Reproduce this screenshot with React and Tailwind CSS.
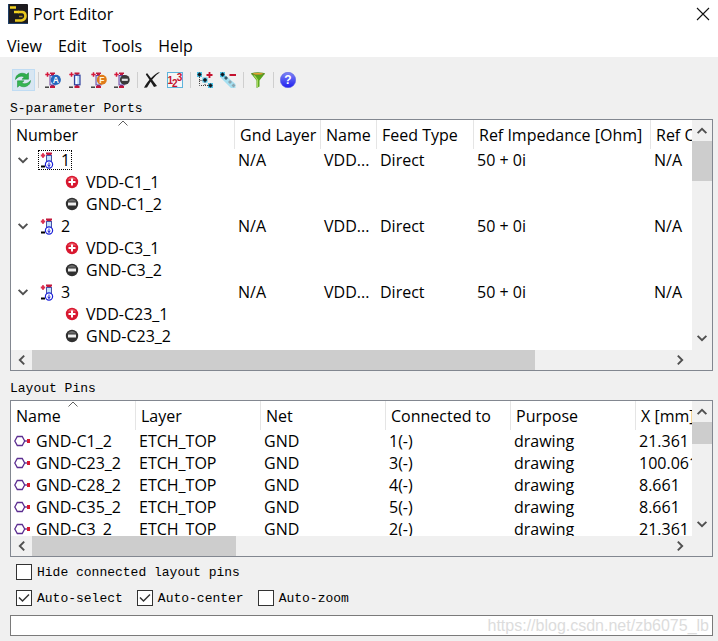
import { useState } from 'react';
import clsx from 'clsx';

const ports = [
  { id: 1, plus: "VDD-C1_1", minus: "GND-C1_2" },
  { id: 2, plus: "VDD-C3_1", minus: "GND-C3_2" },
  { id: 3, plus: "VDD-C23_1", minus: "GND-C23_2" },
];

const pins = [
  { name: "GND-C1_2", connected: "1(-)", x: "21.361" },
  { name: "GND-C23_2", connected: "3(-)", x: "100.061" },
  { name: "GND-C28_2", connected: "4(-)", x: "8.661" },
  { name: "GND-C35_2", connected: "5(-)", x: "8.661" },
  { name: "GND-C3_2", connected: "2(-)", x: "21.361" },
];

const Icon = ({ children, className = "size-4" }) => (
  <svg viewBox="0 0 16 16" className={clsx("block shrink-0", className)} aria-hidden="true">
    {children}
  </svg>
);

const LogoIcon = () => (
  <svg viewBox="0 0 20 20" className="block size-5 shrink-0" aria-hidden="true">
    <rect width="20" height="20" rx="1" fill="#1d1b1e" />
    <path d="M0.5 0V20M0 19.5H20" stroke="#1f4068" />
    <path d="M2 3.5H8M6 8H11" stroke="#f3d321" strokeWidth="2.6" />
    <path d="M10 8H14.5Q17.5 8.5 17.5 12T13.5 16.5H7" fill="none" stroke="#e9c81d" strokeWidth="2.6" />
    <path d="M11 12.5H14.5" stroke="#a58b17" strokeWidth="1.5" />
  </svg>
);

const RefreshIcon = () => (
  <Icon>
    <path d="M0.5 7.5C0.5 2 7 -0.5 11.5 2.5L13.5 0.8V7.2H7L9.2 5C6.5 3.3 3.2 4.3 0.5 7.5Z" fill="#2fae4b" stroke="#168a35" strokeWidth="0.5" />
    <path d="M15.5 8.5C15.5 14 9 16.5 4.5 13.5L2.5 15.2V8.8H9L6.8 11C9.5 12.7 12.8 11.7 15.5 8.5Z" fill="#36b653" stroke="#168a35" strokeWidth="0.5" />
  </Icon>
);

// Plus/minus marks and the tube that all port icons share
const PortBase = () => (
  <>
    <path d="M0.3 2.5H4.7M2.5 0.3V4.7" stroke="#d5163a" strokeWidth="1.5" />
    <path d="M0 15.2H4" stroke="#333333" strokeWidth="1.4" />
    <path d="M5 0.5H10V2H9V4H6V2H5ZM6 12.5H9V14H10V16H5V14H6Z" fill="#c2183c" />
    <rect x="5" y="3.5" width="5" height="9.5" fill="#c9e3ff" stroke="#6b3f9c" />
  </>
);

const PortAutoIcon = () => (
  <Icon>
    <PortBase />
    <circle cx="10.8" cy="7.8" r="5.1" fill="#2468bd" />
    <text x="10.8" y="10.8" textAnchor="middle" fontSize="8.5" fontWeight="700" fontFamily="Liberation Sans, sans-serif" fill="#ffffff">A</text>
  </Icon>
);

const PortTubeIcon = () => (
  <Icon>
    <path d="M1.3 2.5H5.7M3.5 0.3V4.7" stroke="#d5163a" strokeWidth="1.5" />
    <path d="M1 15.2H5" stroke="#333333" strokeWidth="1.4" />
    <path d="M6.5 0.5H11.5V2H10.5V3.5H7.5V2H6.5ZM7.5 12.5H10.5V14H11.5V16H6.5V14H7.5Z" fill="#c2183c" />
    <rect x="6.5" y="3.2" width="5.5" height="9.6" fill="#bfe0fb" stroke="#31409f" strokeWidth="1.2" />
    <path d="M8.5 4V12" stroke="#ffffff" strokeWidth="1.5" />
  </Icon>
);

const PortFileIcon = () => (
  <Icon>
    <PortBase />
    <circle cx="10.8" cy="7.8" r="5" fill="#df7b19" />
    <text x="10.8" y="10.8" textAnchor="middle" fontSize="8.5" fontWeight="700" fontFamily="Liberation Sans, sans-serif" fill="#fff3df">F</text>
  </Icon>
);

const PortMinusIcon = () => (
  <Icon>
    <PortBase />
    <circle cx="10.8" cy="7.8" r="4.9" fill="#3a3a3a" />
    <rect x="7.8" y="6.7" width="6" height="2.2" fill="#e4e4e4" />
  </Icon>
);

const DeleteIcon = () => (
  <Icon>
    <path d="M3 1C5.5 4 9.5 9.5 13 14L10 15C7 10.5 4.5 6 1.8 2.6Z" fill="#1c1c1c" />
    <path d="M16 0.2C11 3.5 6.5 9 3 15.5L0 15.8C3 9.5 9 3.5 14 0.4Z" fill="#1c1c1c" />
  </Icon>
);

const NumbersIcon = () => (
  <Icon>
    <rect x="0.5" y="0.5" width="15" height="15" fill="#f6f6f6" stroke="#5fb4dc" />
    <g fontSize="10" fontWeight="700" fontFamily="Liberation Sans, sans-serif" fill="#c4122f">
      <text x="0.5" y="12">1</text>
      <text x="5" y="15">2</text>
      <text x="9.8" y="8.8">3</text>
    </g>
  </Icon>
);

const TreePlusIcon = () => (
  <Icon>
    <path d="M2.5 5V13.5H11M2.5 8.5H6M8 10V13" fill="none" stroke="#444444" strokeDasharray="1 1" />
    <path d="M0 0H5V5H0ZM5.5 5.5H10.5V10.5H5.5ZM11 11H16V16H11Z" fill="#4cc0e4" />
    <path d="M2.5 0.3L4.7 2.5L2.5 4.7L0.3 2.5ZM8 5.8L10.2 8L8 10.2L5.8 8ZM13.5 11.3L15.7 13.5L13.5 15.7L11.3 13.5Z" fill="#101820" />
    <path d="M12.5 0V6M9.5 3H15.5" stroke="#c4122f" strokeWidth="1.8" />
  </Icon>
);

const TreeMinusIcon = () => (
  <Icon>
    <path d="M0 0H5V3L15.5 12V16H11L0 5Z" fill="#a5dff0" />
    <path d="M0 0H5V5H0Z" fill="#4cc0e4" />
    <path d="M2.5 0.3L4.7 2.5L2.5 4.7L0.3 2.5Z" fill="#101820" />
    <path d="M6 4L8 6L6 8L4 6Z" fill="#33596a" />
    <path d="M10 8L12 10L10 12L8 10ZM13.5 11.5L15.5 13.5L13.5 15.5L11.5 13.5Z" fill="#8da6b0" />
    <path d="M9.5 3H16" stroke="#c4122f" strokeWidth="2" />
  </Icon>
);

const FilterIcon = () => (
  <Icon>
    <path d="M1 1.5L6.5 8.5V16L9.5 14.5V8.5L15 1.5Z" fill="#58a51c" />
    <path d="M4 3L7.5 8V15" fill="none" stroke="#a7d95e" strokeWidth="1.2" />
    <ellipse cx="8" cy="1.8" rx="7" ry="1.6" fill="#5d8f2a" />
    <ellipse cx="8" cy="1.7" rx="5" ry="0.7" fill="#f0a330" />
  </Icon>
);

const HelpIcon = () => (
  <Icon>
    <defs>
      <linearGradient id="helpFill" x1="0" y1="0" x2="0" y2="1">
        <stop offset="0" stopColor="#7f86f5" />
        <stop offset="1" stopColor="#1f1ff0" />
      </linearGradient>
    </defs>
    <circle cx="8" cy="8" r="7.7" fill="url(#helpFill)" stroke="#5a5fe0" strokeWidth="0.6" />
    <text x="8" y="12.3" textAnchor="middle" fontSize="12" fontWeight="700" fontFamily="Liberation Sans, sans-serif" fill="#ffffff">?</text>
  </Icon>
);

const PortRowIcon = () => (
  <svg viewBox="0 0 14 17" className="block h-[17px] w-3.5 shrink-0" aria-hidden="true">
    <path d="M0.8 3.5H5.2M3 1.3V5.7" stroke="#dc3050" strokeWidth="2" />
    <path d="M1 14.5H5" stroke="#000000" strokeWidth="2" />
    <path d="M6 0.5H12V2L10.5 3.5H7.5L6 2Z" fill="#c2183c" />
    <rect x="6.5" y="3.5" width="5" height="8.5" fill="#c3e2fb" stroke="#4a50a8" />
    <circle cx="9" cy="12.5" r="3.6" fill="#ffffff" stroke="#1b22d8" strokeWidth="1.2" />
    <path d="M9 10.5V14.5M7.7 12.7L9 14.5L10.3 12.7" fill="none" stroke="#1b22d8" />
  </svg>
);

const TerminalIcon = ({ positive }) => (
  <svg viewBox="0 0 14 14" className="block size-3.5 shrink-0" aria-hidden="true">
    <circle cx="7" cy="7" r="6.2" fill={positive ? "#d81830" : "#303030"} />
    <path d="M2.5 4.5Q7 -0.5 11.5 4.5" fill={positive ? "#ee5a68" : "#6c6c6c"} />
    {positive ? (
      <path d="M7 3.5V10.5M3.5 7H10.5" stroke="#ffffff" strokeWidth="2" />
    ) : (
      <rect x="3" y="5.5" width="8" height="3" fill="#eeeeee" />
    )}
  </svg>
);

const PinIcon = () => (
  <svg viewBox="0 0 17 12" className="block h-3 w-[17px] shrink-0" aria-hidden="true">
    <path d="M0.8 6L3.3 1.5H8.2L10.7 6L8.2 10.5H3.3Z" fill="#ffffff" stroke="#5b2d91" strokeWidth="1.3" />
    <path d="M11 6H14" stroke="#5b2d91" strokeWidth="1.3" />
    <rect x="13" y="4" width="3" height="4" fill="#d81830" />
  </svg>
);

const chevrons = {
  up: "M3 10.5L8 5.5L13 10.5",
  down: "M3 5.5L8 10.5L13 5.5",
  left: "M10.5 3L5.5 8L10.5 13",
  right: "M5.5 3L10.5 8L5.5 13",
};

const Chevron = ({ dir }) => (
  <Icon className="size-3.5">
    <path d={chevrons[dir]} fill="none" stroke="#505050" strokeWidth="2.2" />
  </Icon>
);

const ToolButton = ({ label, active, children }) => (
  <button
    type="button"
    aria-label={label}
    className={clsx(
      "flex h-[22px] w-[23px] items-center border pl-0.5",
      active ? "border-[#c0dcf3] bg-[#d8e6f2]" : "border-transparent"
    )}
  >
    {children}
  </button>
);

const Separator = () => <span className="mx-[3px] h-4 w-px bg-[#cfcfcf]" />;

const ScrollButton = ({ dir, className }) => (
  <button type="button" aria-label={`Scroll ${dir}`} className={clsx("flex shrink-0 items-center justify-center", className)}>
    <Chevron dir={dir} />
  </button>
);

// Bordered list with its own pair of scroll bars
const ScrollPanel = ({ height, thumbX, thumbY, children }) => (
  <div className="border border-[#828790] bg-white">
    <div className={clsx("flex", height)}>
      <div className="min-w-0 flex-1 overflow-hidden">{children}</div>
      <div className="flex w-5 flex-col bg-[#f0f0f0]">
        <ScrollButton dir="up" className="h-[21px]" />
        <div className={clsx("bg-[#cdcdcd]", thumbY)} />
        <div className="flex-1" />
        <ScrollButton dir="down" className="h-6" />
      </div>
    </div>
    <div className="flex h-5 bg-[#f0f0f0] pr-5">
      <ScrollButton dir="left" className="w-[21px]" />
      <div className="flex-1">
        <div className={clsx("h-full bg-[#cdcdcd]", thumbX)} />
      </div>
      <ScrollButton dir="right" className="w-6" />
    </div>
  </div>
);

const HeaderCell = ({ sorted, children }) => (
  <th scope="col" className="relative h-[29px] overflow-hidden border-r border-[#e5e5e5] pl-[5px] text-left font-normal whitespace-nowrap">
    {sorted && (
      <svg viewBox="0 0 10 6" className="absolute top-0 left-1/2 h-1.5 w-2.5 -translate-x-1/2" aria-hidden="true">
        <path d="M0.5 5.5L5 1L9.5 5.5" fill="none" stroke="#606060" />
      </svg>
    )}
    {children}
  </th>
);

const Cell = ({ children }) => <td className="h-[22px] overflow-hidden pl-[3px] whitespace-nowrap">{children}</td>;

const PortRows = ({ port, focused }) => {
  const [open, setOpen] = useState(true);

  return (
    <>
      <tr>
        <td className="h-[22px] p-0">
          <div className="flex items-center pl-[5px]">
            <button type="button" aria-label={`Toggle port ${port.id}`} onClick={() => setOpen(!open)}>
              <Chevron dir={open ? "down" : "right"} />
            </button>
            <span
              className={clsx(
                "ml-2 flex h-5 items-center gap-[7px] border border-dotted px-px",
                focused ? "border-black" : "border-transparent"
              )}
            >
              <PortRowIcon />
              {port.id}
            </span>
          </div>
        </td>
        <Cell>N/A</Cell>
        <Cell>VDD...</Cell>
        <Cell>Direct</Cell>
        <Cell>50 + 0i</Cell>
        <Cell>N/A</Cell>
      </tr>
      {open && [port.plus, port.minus].map((net, i) => (
        <tr key={net}>
          <td colSpan={6} className="h-[22px] p-0">
            <div className="flex items-center gap-[7px] pl-[54px]">
              <TerminalIcon positive={i === 0} />
              {net}
            </div>
          </td>
        </tr>
      ))}
    </>
  );
};

const CheckOption = ({ label, defaultChecked }) => (
  <label className="flex items-center gap-[5px]">
    <span className="relative block size-4">
      <input type="checkbox" defaultChecked={defaultChecked} className="peer block size-4 appearance-none border border-[#333333] bg-white" />
      <svg viewBox="0 0 16 16" className="pointer-events-none absolute inset-0 hidden size-4 peer-checked:block" aria-hidden="true">
        <path d="M3 7.5L6.5 11L13 4.5" fill="none" stroke="#333333" strokeWidth="1.5" />
      </svg>
    </span>
    <span className="pt-0.5">{label}</span>
  </label>
);

const App = () => {
  return (
    <div className="min-h-screen bg-[#f0f0f0] font-['Open_Sans',sans-serif] text-base leading-5 text-black">
      <header className="bg-white">
        <div className="flex h-7 items-center justify-between pr-2 pl-2">
          <h1 className="flex items-center gap-[5px]">
            <LogoIcon />
            Port Editor
          </h1>
          <button type="button" aria-label="Close">
            <svg viewBox="0 0 14 14" className="block size-3.5" aria-hidden="true">
              <path d="M1 1L13 13M13 1L1 13" stroke="#111111" strokeWidth="1.1" />
            </svg>
          </button>
        </div>
        <nav className="flex h-[29px] items-center gap-4 px-[7px] pt-1.5">
          {["View", "Edit", "Tools", "Help"].map((item) => (
            <button key={item} type="button">{item}</button>
          ))}
        </nav>
      </header>

      <div className="flex items-center px-3 pt-3" role="toolbar">
        <ToolButton label="Refresh" active><RefreshIcon /></ToolButton>
        <Separator />
        <ToolButton label="Auto ports"><PortAutoIcon /></ToolButton>
        <ToolButton label="Add port"><PortTubeIcon /></ToolButton>
        <ToolButton label="Port from file"><PortFileIcon /></ToolButton>
        <ToolButton label="Reference port"><PortMinusIcon /></ToolButton>
        <Separator />
        <ToolButton label="Delete"><DeleteIcon /></ToolButton>
        <ToolButton label="Renumber"><NumbersIcon /></ToolButton>
        <Separator />
        <ToolButton label="Expand"><TreePlusIcon /></ToolButton>
        <ToolButton label="Collapse"><TreeMinusIcon /></ToolButton>
        <Separator />
        <ToolButton label="Filter"><FilterIcon /></ToolButton>
        <Separator />
        <ToolButton label="Help"><HelpIcon /></ToolButton>
      </div>

      <main className="pr-[5px] pl-2.5">
        <h2 className="pt-2 font-['Liberation_Mono',monospace] text-[13px]">S-parameter Ports</h2>
        <ScrollPanel height="h-[230px]" thumbX="w-[503px]" thumbY="h-10">
          <table className="w-[780px] table-fixed border-separate border-spacing-0">
            <colgroup>
              <col className="w-[224px]" />
              <col className="w-[86px]" />
              <col className="w-14" />
              <col className="w-[97px]" />
              <col className="w-[177px]" />
              <col />
            </colgroup>
            <thead>
              <tr>
                <HeaderCell sorted>Number</HeaderCell>
                <HeaderCell>Gnd Layer</HeaderCell>
                <HeaderCell>Name</HeaderCell>
                <HeaderCell>Feed Type</HeaderCell>
                <HeaderCell>Ref Impedance [Ohm]</HeaderCell>
                <HeaderCell>Ref Offset</HeaderCell>
              </tr>
            </thead>
            <tbody>
              {ports.map((port, i) => (
                <PortRows key={port.id} port={port} focused={i === 0} />
              ))}
            </tbody>
          </table>
        </ScrollPanel>

        <h2 className="pt-2 pb-px font-['Liberation_Mono',monospace] text-[13px]">Layout Pins</h2>
        <ScrollPanel height="h-[135px]" thumbX="w-[204px]" thumbY="h-[22px]">
          <table className="w-[750px] table-fixed border-separate border-spacing-0">
            <thead>
              <tr>
                <HeaderCell sorted>Name</HeaderCell>
                <HeaderCell>Layer</HeaderCell>
                <HeaderCell>Net</HeaderCell>
                <HeaderCell>Connected to</HeaderCell>
                <HeaderCell>Purpose</HeaderCell>
                <HeaderCell>X [mm]</HeaderCell>
              </tr>
            </thead>
            <tbody>
              {pins.map((pin) => (
                <tr key={pin.name}>
                  <Cell>
                    <span className="flex items-center gap-[5px]">
                      <PinIcon />
                      {pin.name}
                    </span>
                  </Cell>
                  <Cell>ETCH_TOP</Cell>
                  <Cell>GND</Cell>
                  <Cell>{pin.connected}</Cell>
                  <Cell>drawing</Cell>
                  <Cell>{pin.x}</Cell>
                </tr>
              ))}
            </tbody>
          </table>
        </ScrollPanel>

        <div className="flex flex-col gap-1 pt-1 pb-1.5 pl-1.5 font-['Liberation_Mono',monospace] text-[13px]">
          <div className="flex">
            <CheckOption label="Hide connected layout pins" />
          </div>
          <div className="flex gap-3.5">
            <CheckOption label="Auto-select" defaultChecked />
            <CheckOption label="Auto-center" defaultChecked />
            <CheckOption label="Auto-zoom" />
          </div>
        </div>

        <div className="relative">
          <input type="text" aria-label="Message" readOnly className="block h-[21px] w-full border border-[#7a7a7a] bg-white px-1" />
          <span className="pointer-events-none absolute inset-y-0 right-1 flex items-center font-['Liberation_Sans',sans-serif] text-base leading-5 text-[#dcdcdc]">
            https://blog.csdn.net/zb6075_lb
          </span>
        </div>
      </main>
    </div>
  );
};

export default App;
